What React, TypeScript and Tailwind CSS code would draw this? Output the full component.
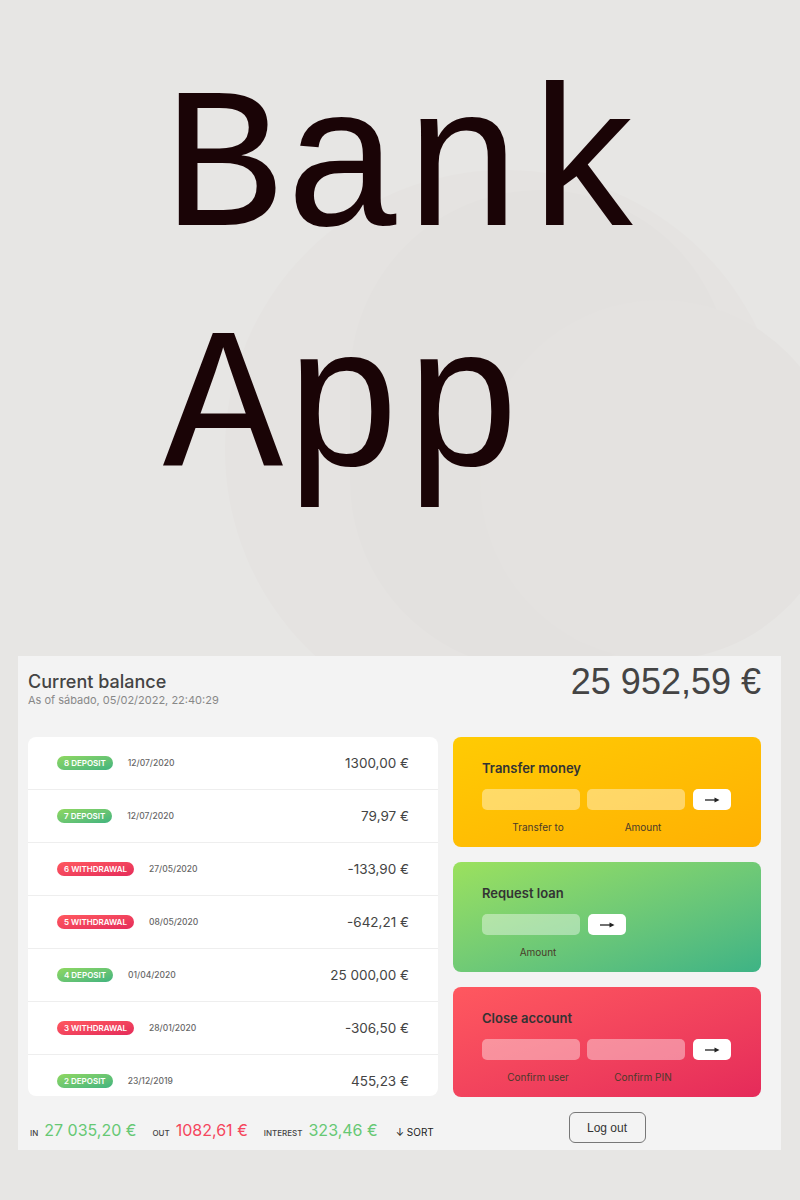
import React from "react";

type Mov = { n: number; type: "deposit" | "withdrawal"; date: string; amount: string };

const movements: Mov[] = [
  { n: 8, type: "deposit", date: "12/07/2020", amount: "1300,00 €" },
  { n: 7, type: "deposit", date: "12/07/2020", amount: "79,97 €" },
  { n: 6, type: "withdrawal", date: "27/05/2020", amount: "-133,90 €" },
  { n: 5, type: "withdrawal", date: "08/05/2020", amount: "-642,21 €" },
  { n: 4, type: "deposit", date: "01/04/2020", amount: "25 000,00 €" },
  { n: 3, type: "withdrawal", date: "28/01/2020", amount: "-306,50 €" },
  { n: 2, type: "deposit", date: "23/12/2019", amount: "455,23 €" },
];

const sans = { fontFamily: "Inter, 'Open Sans', sans-serif" };

function Arrow() {
  return (
    <svg width="16" height="8" viewBox="0 0 16 8">
      <line x1="1" y1="4" x2="12" y2="4" stroke="#222" strokeWidth="1.3" />
      <path d="M10.5 1.5 L15.5 4 L10.5 6.5 Z" fill="#222" />
    </svg>
  );
}

function Inputs({ labels, bg }: { labels: string[]; bg: string }) {
  return (
    <div>
      <div className="flex items-center">
        {labels.map((l, i) => (
          <div key={l} className={`h-[21px] w-[98px] rounded-[5px] ${bg} ${i > 0 ? "ml-[7px]" : ""}`} />
        ))}
        <div className="ml-[8px] flex h-[21px] w-[38px] items-center justify-center rounded-[5px] bg-white">
          <Arrow />
        </div>
      </div>
      <div className="mt-[11px] flex">
        {labels.map((l, i) => (
          <div
            key={l}
            className={`w-[98px] pl-[14px] text-center text-[10px] leading-[12px] text-[#4a3a2a] ${i > 0 ? "ml-[7px]" : ""}`}
          >
            {l}
          </div>
        ))}
      </div>
    </div>
  );
}

function Card({ title, gradient, labels }: { title: string; gradient: string; labels: string[] }) {
  return (
    <div className={`h-[110px] rounded-[8px] px-[29px] pt-[23px] ${gradient}`}>
      <div className="mb-[13px] text-[13px] font-semibold leading-[16px] text-[#333]">{title}</div>
      <Inputs labels={labels} bg="bg-white/40" />
    </div>
  );
}

export default function App() {
  return (
    <div className="relative h-[1200px] w-[800px] overflow-hidden bg-[#e7e6e4]" style={sans}>
      {/* faint background blobs */}
      <div className="absolute left-[225px] top-[170px] h-[560px] w-[560px] rounded-full bg-[#e5e3e1]" />
      <div className="absolute left-[350px] top-[190px] h-[480px] w-[380px] rounded-full bg-[#e3e1df]" />
      <div className="absolute left-[480px] top-[300px] h-[360px] w-[360px] rounded-full bg-[#e4e2e0]" />

      <div className="relative">
        <h1
          className="pl-[163px] pt-[52px] text-[200px] font-normal leading-[240px] text-[#1a0406]"
          style={{ fontFamily: "'Liberation Mono', 'DejaVu Sans Mono', monospace" }}
        >
          <div>Bank</div>
          <div>App</div>
        </h1>

        <div className="ml-[18px] mt-[124px] h-[494px] w-[763px] bg-[#f3f3f3] pl-[10px] pr-[20px]">
          <div className="flex h-[81px] items-start justify-between">
            <div className="pt-[15px]">
              <div className="text-[18px] font-medium leading-[22px] text-[#444]">Current balance</div>
              <div className="text-[11px] leading-[14px] text-[#888]">As of sábado, 05/02/2022, 22:40:29</div>
            </div>
            <div
              className="pt-[6px] text-[36px] leading-[40px] text-[#444]"
              style={{ fontFamily: "'Liberation Sans', Arial, sans-serif" }}
            >
              25 952,59 €
            </div>
          </div>

          <div className="flex gap-[15px]">
            <div className="w-[410px]">
              <div className="h-[359px] overflow-hidden rounded-[8px] bg-white">
                {movements.map((m) => (
                  <div key={m.n} className="flex h-[53px] items-center border-b border-[#eee] pl-[29px] pr-[29px]">
                    <div
                      className={`flex h-[14px] items-center rounded-full px-[7px] text-[8px] font-semibold uppercase leading-none text-white ${
                        m.type === "deposit"
                          ? "bg-gradient-to-br from-[#8fd85f] to-[#3fb37e]"
                          : "bg-gradient-to-br from-[#ff585f] to-[#e52a5a]"
                      }`}
                    >
                      {m.n} {m.type}
                    </div>
                    <div className="ml-[15px] text-[8.5px] font-medium text-[#666]">{m.date}</div>
                    <div className="ml-auto text-[13.5px] text-[#444]">{m.amount}</div>
                  </div>
                ))}
              </div>
              <div className="mt-[22px] flex items-baseline whitespace-nowrap pl-[2px] text-[#444]">
                <span className="text-[8px] font-medium uppercase">In</span>
                <span className="ml-[6px] text-[16px] text-[#66c873]">27 035,20 €</span>
                <span className="ml-[16px] text-[8px] font-medium uppercase">Out</span>
                <span className="ml-[6px] text-[16px] text-[#f5465d]">1082,61 €</span>
                <span className="ml-[16px] text-[8px] font-medium uppercase">Interest</span>
                <span className="ml-[6px] text-[16px] text-[#66c873]">323,46 €</span>
                <span className="ml-[18px] text-[10px] text-[#222]">↓ SORT</span>
              </div>
            </div>

            <div className="w-[308px]">
              <div className="flex flex-col gap-[15px]">
                <Card
                  title="Transfer money"
                  gradient="bg-gradient-to-br from-[#ffcb03] to-[#ffb003]"
                  labels={["Transfer to", "Amount"]}
                />
                <Card
                  title="Request loan"
                  gradient="bg-gradient-to-br from-[#9be15d] to-[#3db385]"
                  labels={["Amount"]}
                />
                <Card
                  title="Close account"
                  gradient="bg-gradient-to-br from-[#ff585f] to-[#e52a5a]"
                  labels={["Confirm user", "Confirm PIN"]}
                />
              </div>
              <div className="mt-[15px] flex justify-center">
                <button
                  className="h-[31px] w-[77px] rounded-[6px] border border-[#777] text-[12px] text-[#333]"
                  style={{ fontFamily: "'Liberation Sans', Arial, sans-serif" }}
                >
                  Log out
                </button>
              </div>
            </div>
          </div>
        </div>
      </div>
    </div>
  );
}
